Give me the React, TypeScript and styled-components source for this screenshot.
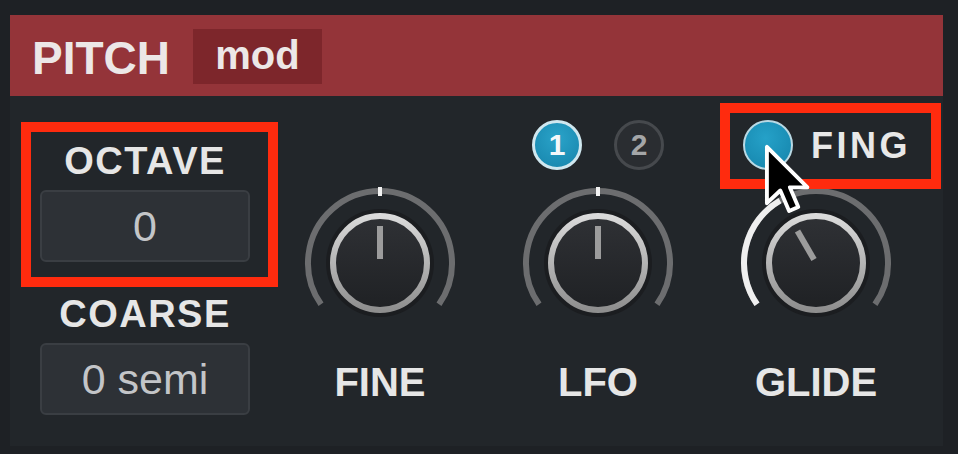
import styled, { createGlobalStyle } from "styled-components";

const GlobalStyle = createGlobalStyle`
  html, body {
    margin: 0;
    padding: 0;
    background: #1c1e21;
  }
  body {
    font-family: "Liberation Sans", Arial, sans-serif;
  }
`;

const Frame = styled.div`
  width: 958px;
  height: 454px;
  box-sizing: border-box;
  padding: 15px 15px 8px 10px;
  background: #1e2125;
`;

const Panel = styled.section`
  display: flex;
  flex-direction: column;
  height: 100%;
  background: #22262a;
`;

const Header = styled.header`
  display: flex;
  align-items: center;
  gap: 23px;
  height: 81px;
  padding-left: 22px;
  background: #943439;
  color: #ece7e7;
  font-weight: 700;
`;

const Title = styled.h1`
  margin: 0;
  font-size: 46px;
  line-height: 1;
  font-weight: 700;
  padding-top: 4px;
`;

const ModTag = styled.span`
  display: flex;
  align-items: center;
  justify-content: center;
  width: 129px;
  height: 55px;
  margin-top: 1px;
  background: #7d262b;
  font-size: 40px;
  line-height: 1;
  padding-bottom: 2px;
  box-sizing: border-box;
`;

const Body = styled.div`
  display: flex;
  padding-left: 30px;
  gap: 21px;
`;

const LeftColumn = styled.div`
  display: flex;
  flex-direction: column;
  width: 210px;
  padding-top: 46px;
`;

const FieldGroup = styled.div<{ $spaced?: boolean }>`
  position: relative;
  display: flex;
  flex-direction: column;
  align-items: center;
  margin-top: ${(p) => (p.$spaced ? "33px" : "0")};
`;

const FieldLabel = styled.div`
  font-size: 38px;
  line-height: 38px;
  font-weight: 700;
  letter-spacing: 1.5px;
  color: #e6e6e6;
  margin-bottom: 10px;
`;

const ValueBox = styled.div`
  width: 210px;
  height: 72px;
  box-sizing: border-box;
  display: flex;
  align-items: center;
  justify-content: center;
  background: #2d3136;
  border: 2px solid #3a3e43;
  border-radius: 6px;
  color: #c3c5c8;
  font-size: 43px;
  line-height: 1;
`;

const KnobRow = styled.div`
  display: flex;
`;

const KnobColumn = styled.div`
  display: flex;
  flex-direction: column;
  align-items: center;
  width: 218px;
  padding-top: 24px;
`;

const TopRow = styled.div<{ $gap: number; $start?: number }>`
  position: relative;
  display: flex;
  align-items: center;
  justify-content: ${(p) => (p.$start !== undefined ? "flex-start" : "center")};
  gap: ${(p) => p.$gap}px;
  align-self: stretch;
  height: 50px;
  padding-left: ${(p) => p.$start ?? 0}px;
  margin-bottom: 8px;
`;

const Badge = styled.span<{ $on?: boolean }>`
  display: flex;
  align-items: center;
  justify-content: center;
  width: 50px;
  height: 50px;
  box-sizing: border-box;
  border-radius: 50%;
  border: 3px solid ${(p) => (p.$on ? "#cfe7ef" : "#46494d")};
  background: ${(p) =>
    p.$on ? "radial-gradient(circle at 50% 35%, #2aa3c9, #1684ab)" : "#2a2d31"};
  color: ${(p) => (p.$on ? "#f4f8fa" : "#a4a6a8")};
  font-size: 30px;
  font-weight: 700;
  line-height: 1;
`;

const ToggleDot = styled.span`
  width: 50px;
  height: 50px;
  box-sizing: border-box;
  border-radius: 50%;
  border: 2px solid #b9d9e4;
  background: radial-gradient(circle at 45% 35%, #25a1c8, #1483aa);
`;

const ToggleLabel = styled.span`
  font-size: 36px;
  line-height: 1;
  font-weight: 700;
  letter-spacing: 3.5px;
  color: #e8e8e8;
  padding-top: 2px;
`;

const KnobLabel = styled.div`
  margin-top: 14px;
  font-size: 40px;
  line-height: 40px;
  font-weight: 700;
  color: #e6e6e6;
`;

const Highlight = styled.div<{ $t: number; $r: number; $b: number; $l: number }>`
  position: absolute;
  top: ${(p) => p.$t}px;
  right: ${(p) => p.$r}px;
  bottom: ${(p) => p.$b}px;
  left: ${(p) => p.$l}px;
  border: 10px solid #ff2b0e;
  pointer-events: none;
`;

const Pointer = styled.svg`
  position: absolute;
  left: 57px;
  top: 24px;
  width: 46px;
  height: 74px;
  overflow: visible;
`;

const SIZE = 170;
const C = SIZE / 2;

function pt(deg: number, r: number) {
  const a = (deg * Math.PI) / 180;
  return [C + r * Math.sin(a), C - r * Math.cos(a)];
}

function arc(from: number, to: number, r: number) {
  const [x1, y1] = pt(from, r);
  const [x2, y2] = pt(to, r);
  const large = to - from > 180 ? 1 : 0;
  return `M ${x1} ${y1} A ${r} ${r} 0 ${large} 1 ${x2} ${y2}`;
}

type KnobProps = { angle: number; fill?: number; center?: boolean; id: string };

function Knob({ angle, fill, center, id }: KnobProps) {
  const [ix1, iy1] = pt(angle, 4);
  const [ix2, iy2] = pt(angle, 37);
  return (
    <svg width={SIZE} height={SIZE} viewBox={`0 0 ${SIZE} ${SIZE}`}>
      <defs>
        <linearGradient id={`${id}-ring`} x1="0" y1="0" x2="0" y2="1">
          <stop offset="0" stopColor="#dadada" />
          <stop offset="1" stopColor="#8e8e8e" />
        </linearGradient>
        <linearGradient id={`${id}-cap`} x1="0" y1="0" x2="0" y2="1">
          <stop offset="0" stopColor="#2f3135" />
          <stop offset="1" stopColor="#1f2124" />
        </linearGradient>
      </defs>
      <path d={arc(-125, 125, 72)} fill="none" stroke="#6c6d6f" strokeWidth={6} />
      {fill !== undefined && (
        <path d={arc(-125, fill, 72)} fill="none" stroke="#efefef" strokeWidth={6} />
      )}
      {center && <rect x={C - 2} y={C - 76} width={4} height={9} fill="#f2f2f2" />}
      <circle cx={C} cy={C} r={54} fill="#1b1d20" />
      <circle cx={C} cy={C} r={47} fill={`url(#${id}-cap)`} stroke={`url(#${id}-ring)`} strokeWidth={6} />
      <line x1={ix1} y1={iy1} x2={ix2} y2={iy2} stroke="#9c9c9c" strokeWidth={6} />
    </svg>
  );
}

export default function App() {
  return (
    <>
      <GlobalStyle />
      <Frame>
        <Panel>
          <Header>
            <Title>PITCH</Title>
            <ModTag>mod</ModTag>
          </Header>
          <Body>
            <LeftColumn>
              <FieldGroup>
                <FieldLabel>OCTAVE</FieldLabel>
                <ValueBox>0</ValueBox>
                <Highlight $t={-20} $r={-28} $b={-25} $l={-19} />
              </FieldGroup>
              <FieldGroup $spaced>
                <FieldLabel>COARSE</FieldLabel>
                <ValueBox>0 semi</ValueBox>
              </FieldGroup>
            </LeftColumn>

            <KnobRow>
              <KnobColumn>
                <TopRow $gap={32} />
                <Knob id="fine" angle={0} center />
                <KnobLabel>FINE</KnobLabel>
              </KnobColumn>

              <KnobColumn>
                <TopRow $gap={32}>
                  <Badge $on>1</Badge>
                  <Badge>2</Badge>
                </TopRow>
                <Knob id="lfo" angle={0} center />
                <KnobLabel>LFO</KnobLabel>
              </KnobColumn>

              <KnobColumn>
                <TopRow $gap={18} $start={36}>
                  <ToggleDot />
                  <ToggleLabel>FING</ToggleLabel>
                  <Highlight $t={-17} $r={-16} $b={-19} $l={13} />
                  <Pointer viewBox="0 0 13 21">
                    <path
                      d="M0.8 0.8 L0.8 16.8 L4.6 13.2 L7.1 19 L9.7 17.9 L7.3 12.3 L12.3 12.3 Z"
                      fill="#000"
                      stroke="#fff"
                      strokeWidth={1.1}
                      strokeLinejoin="round"
                    />
                  </Pointer>
                </TopRow>
                <Knob id="glide" angle={-30} fill={-30} />
                <KnobLabel>GLIDE</KnobLabel>
              </KnobColumn>
            </KnobRow>
          </Body>
        </Panel>
      </Frame>
    </>
  );
}
